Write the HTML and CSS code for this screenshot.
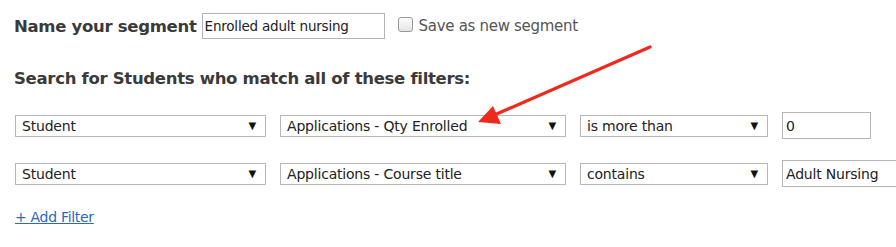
FILE: index.html
```html
<!DOCTYPE html>
<html lang="en">
<head>
    <meta charset="UTF-8">
    <title>Segment Filters</title>
    <link rel="stylesheet" href="styles.css">
</head>
<body>

    <div class="page">
        <div class="nameRow">
            <span class="label">Name your segment</span>
            <input class="nameInput" type="text" value="Enrolled adult nursing">
            <label class="saveNew"><span class="check"></span>Save as new segment</label>
        </div>

        <h3 class="heading">Search for Students who match all of these filters:</h3>

        <!--each filter row: entity, field, operator, value-->
        <div class="filterRow">
            <div class="select s1"><span>Student</span><span class="caret">&#9660;</span></div>
            <div class="select s2"><span>Applications - Qty Enrolled</span><span class="caret">&#9660;</span></div>
            <div class="select s3"><span>is more than</span><span class="caret">&#9660;</span></div>
            <input class="valueInput short" type="text" value="0">
        </div>

        <div class="filterRow">
            <div class="select s1"><span>Student</span><span class="caret">&#9660;</span></div>
            <div class="select s2"><span>Applications - Course title</span><span class="caret">&#9660;</span></div>
            <div class="select s3"><span>contains</span><span class="caret">&#9660;</span></div>
            <input class="valueInput long" type="text" value="Adult Nursing">
        </div>

        <a href="#" class="addFilter">+ Add Filter</a>

        <!--annotation arrow drawn over the screenshot-->
        <svg class="arrow" width="896" height="247" viewBox="0 0 896 247">
            <line x1="650" y1="47" x2="492" y2="116" stroke="#ee2a1f" stroke-width="3.2" stroke-linecap="round"/>
            <polygon points="478,122 493,106 501,124" fill="#ee2a1f"/>
        </svg>
    </div>

</body>
</html>
```

FILE: styles.css
```css
body { margin: 0; background: #fff; font-family: "DejaVu Sans", Verdana, sans-serif; color: #333; }
.page { position: relative; padding: 13px 0 0 14px; height: 234px; overflow: hidden; }
.nameRow { display: flex; align-items: center; height: 26px; }
.label { font-weight: bold; font-size: 16.5px; letter-spacing: -0.3px; margin-right: 5px; color: #3a3a3a; }
.nameInput { width: 183px; height: 26px; box-sizing: border-box; border: 1px solid #b5b5b5; padding: 0 2px; font: 13.5px "DejaVu Sans", sans-serif; letter-spacing: -0.2px; color: #222; margin: 0; }
.saveNew { display: flex; align-items: center; font-size: 15px; color: #555; margin-left: 13px; letter-spacing: -0.3px; }
.check { width: 13px; height: 13px; border: 1px solid #999; border-radius: 3px; background: linear-gradient(#fdfdfd, #e4e4e4); margin-right: 6px; margin-top: -4px; }
.heading { font-size: 16.5px; letter-spacing: -0.3px; margin: 30px 0 0 0; color: #3a3a3a; line-height: 20px; }
.filterRow { display: flex; align-items: center; gap: 14px; margin-top: 23px; margin-left: 1px; height: 27px; }
.filterRow + .filterRow { margin-top: 21px; }
.select { flex-shrink: 0; display: flex; justify-content: space-between; align-items: center; height: 22px; box-sizing: border-box; border: 1px solid #b8b8b8; padding: 0 9px 0 6px; font-size: 14px; letter-spacing: -0.2px; color: #222; }
.caret { font-size: 10px; color: #111; }
.s1 { width: 251px; }
.s2 { width: 286px; }
.s3 { width: 188px; }
.valueInput { flex-shrink: 0; height: 27px; box-sizing: border-box; border: 1px solid #b5b5b5; padding: 0 3px; font: 14px "DejaVu Sans", sans-serif; letter-spacing: -0.2px; color: #222; margin: 0; }
.short { width: 89px; }
.long { width: 130px; }
.addFilter { display: inline-block; margin-top: 22px; margin-left: 1px; font-size: 14px; letter-spacing: -0.3px; color: #2b68c0; text-decoration: underline; }
.arrow { position: absolute; left: 0; top: 0; pointer-events: none; }
```
